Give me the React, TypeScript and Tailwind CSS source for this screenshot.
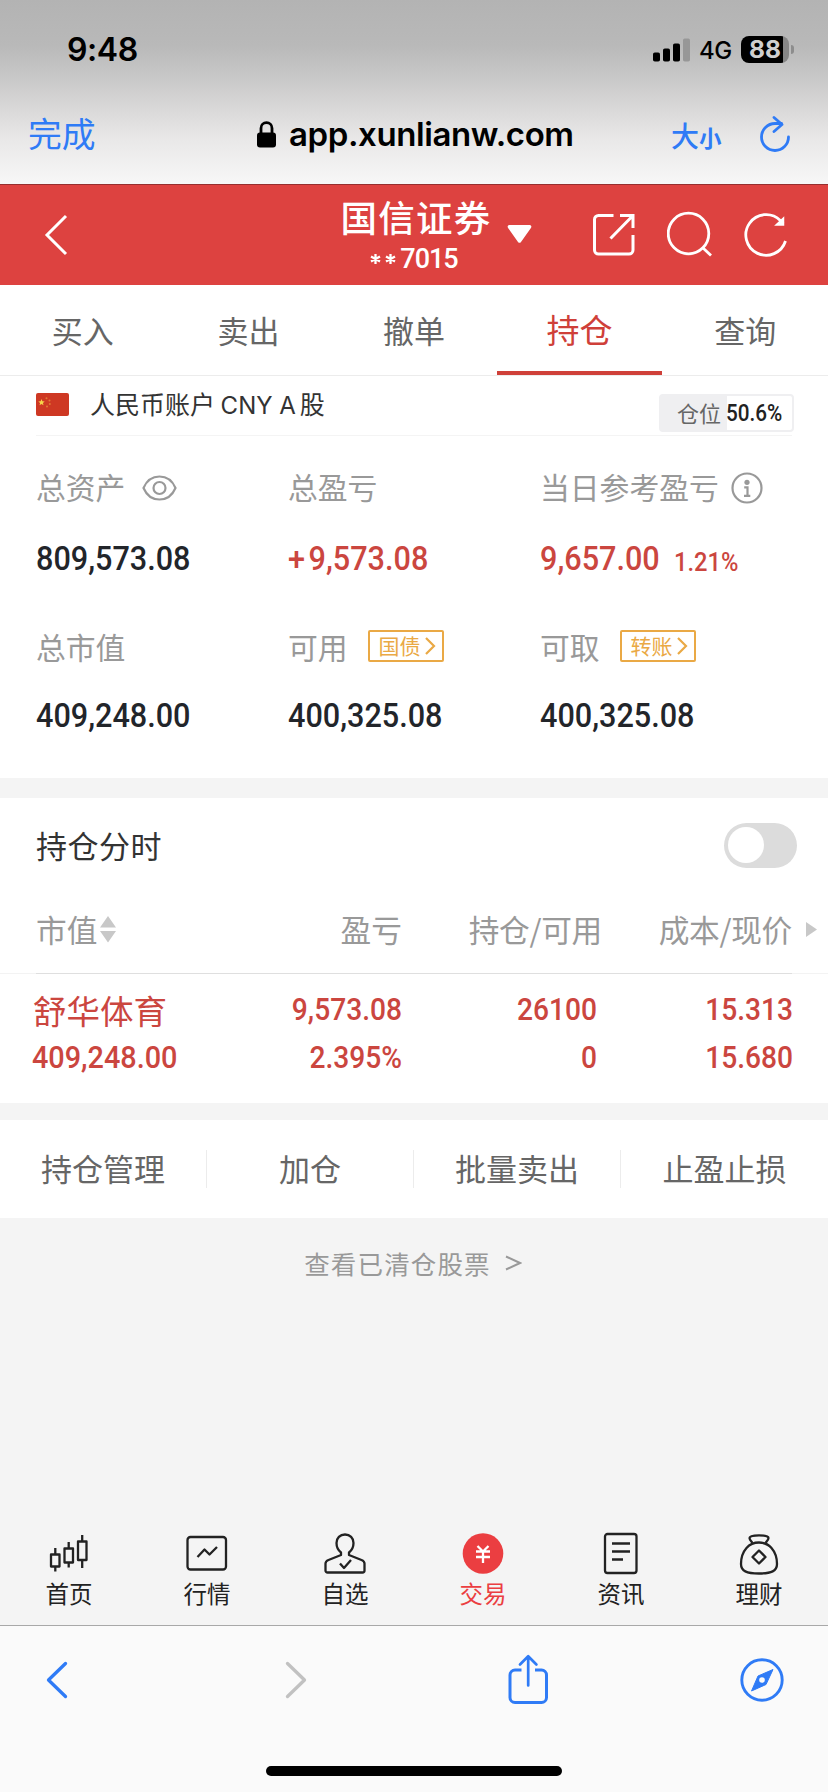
import { ReactNode } from "react";
import clsx from "clsx";

const tabs = ["买入", "卖出", "撤单", "持仓", "查询"];
const actions = ["持仓管理", "加仓", "批量卖出", "止盈止损"];

export default function App() {
  return (
    <div className="flex flex-col w-[828px] h-[1792px] overflow-hidden bg-[#f4f4f4] font-['Noto_Sans_CJK_SC',sans-serif] whitespace-nowrap">
      <BrowserHeader />
      <TitleBar />
      <Tabs />
      <AccountSummary />
      <Holdings />
      <Actions />
      <div className="flex items-center justify-center h-[90px] pr-0.5 text-[25.5px] tracking-[1.15px] text-[#999]">
        查看已清仓股票
        <svg className="ml-[14px]" width="17" height="18" viewBox="0 0 17 18" fill="none" stroke="#999" strokeWidth="2">
          <path d="M1 2.5 15 9 1 15.5" />
        </svg>
      </div>
      <div className="grow" />
      <BottomNav />
      <BrowserToolbar />
    </div>
  );
}

// Narrow digits used for every amount
const Num = ({ children, className }: { children: ReactNode; className?: string }) => (
  <span className={clsx("inline-block font-['Roboto',sans-serif] font-medium leading-none", className)}>
    {children}
  </span>
);

const BrowserHeader = () => (
  <div className="flex flex-col h-[184px] shrink-0 bg-[linear-gradient(#b3b3b3_0%,#b9b9b9_25%,#c9c9c9_43%,#dad9d9_60%,#e9e8e8_76%,#f7f7f7_100%)]">
    <div className="flex h-[99px] items-center font-['Inter',sans-serif] text-black">
      <span className="ml-[67px] w-[586px] text-[32px] font-semibold leading-none tracking-[-0.4px]">9:48</span>
      <svg width="38" height="24" viewBox="0 0 38 24">
        <rect x="0" y="14.5" width="7" height="9" rx="1.8" />
        <rect x="10" y="10.5" width="7" height="13" rx="1.8" />
        <rect x="20" y="5.5" width="7" height="18" rx="1.8" />
        <rect x="30" y="0.5" width="7" height="23" rx="1.8" fill="#979797" />
      </svg>
      <span className="ml-2 mt-0.5 w-[42px] text-[24px] font-medium leading-none tracking-[-0.5px]">4G</span>
      <div className="w-12 h-[27px] pl-2 rounded-[8px] bg-[linear-gradient(90deg,#000_42px,#868686_42px)]">
        <span className="block text-[24.5px] font-bold leading-[27px] text-[#cfcfcf]">88</span>
      </div>
      <div className="ml-[2px] w-[3px] h-[9px] rounded-r-full bg-[#8d8d8d]" />
    </div>
    <div className="flex h-[74px] items-center">
      <span className="ml-7 w-[229px] text-[33.8px] leading-none text-[#2f7bf6] pb-[7px]">完成</span>
      <svg className="mb-1" width="19" height="27" viewBox="0 0 19 27">
        <rect x="0" y="11.5" width="19" height="15" rx="3" />
        <path d="M4 13V7.2a5.5 5.5 0 0 1 11 0V13" fill="none" stroke="#000" strokeWidth="2.8" />
      </svg>
      <span className="ml-[13px] w-[382px] pb-1 text-[33px] font-semibold leading-none font-['Inter',sans-serif] tracking-[-0.4px]">
        app.xunlianw.com
      </span>
      <span className="flex items-baseline w-[88px] pb-[3px] font-medium leading-none text-[#2f7bf6]">
        <span className="text-[28px]">大</span>
        <span className="text-[22.5px] font-bold">小</span>
      </span>
      <svg className="mb-[3px]" width="32" height="38" viewBox="0 0 32 38" fill="none" stroke="#2f7bf6" strokeWidth="2.8" strokeLinecap="round" strokeLinejoin="round">
        <path d="M29.5 21A13.5 13.5 0 1 1 16 7.5h6.500" />
        <path d="M15 1.5 23 8.5 15 15.5" />
      </svg>
    </div>
  </div>
);

const TitleBar = () => (
  <div className="flex h-[101px] shrink-0 bg-[#dd4240] border-t border-[#962f2f] text-white">
    <svg className="ml-11 mt-[29px]" width="25" height="42" viewBox="0 0 25 42" fill="none" stroke="#fff" strokeWidth="3">
      <path d="M22 2 3 21l19 19" />
    </svg>
    <div className="flex flex-col items-center w-[150px] ml-[270px]">
      <span className="mt-[11px] pl-1 text-[36.5px] font-medium leading-[42px] tracking-[1.2px]">国信证券</span>
      <span className="flex mt-[5px] font-['Roboto',sans-serif] text-[27px] leading-[32px] font-medium">
        <svg className="mt-[10px] mr-1" width="26" height="12" viewBox="0 0 26 12" stroke="#fff" strokeWidth="2.3">
          <path d="M5.5 1v10M1 3.5l9 5M10 3.5l-9 5M20.5 1v10M16 3.5l9 5M25 3.5l-9 5" />
        </svg>
        <span className="tracking-[-1px]">7015</span>
      </span>
    </div>
    <svg className="ml-[18px] mt-10" width="25" height="19" viewBox="0 0 25 19" fill="#fff">
      <path d="M2.5 0h20a1.8 1.8 0 0 1 1.4 3L14 17a2 2 0 0 1-3 0L1.100 3a1.8 1.8 0 0 1 1.4-3z" />
    </svg>
    <svg className="ml-[61px] mt-7" width="42" height="43" viewBox="0 0 42 43" fill="none" stroke="#fff" strokeWidth="3">
      <path d="M20.500 2.500H5.500a4 4 0 0 0-4 4V37a4 4 0 0 0 4 4H36a4 4 0 0 0 4-4V22M27 2.500h13V15M39.500 3 17.500 25.500" />
    </svg>
    <svg className="ml-8 mt-[26px]" width="46" height="46" viewBox="0 0 46 46" fill="none" stroke="#fff" strokeWidth="2.800">
      <circle cx="21.500" cy="22.500" r="20.300" />
      <path d="M35.500 36.500 44 44.500" />
    </svg>
    <svg className="ml-[30px] mt-[26px]" width="46" height="46" viewBox="0 0 46 46" fill="none" stroke="#fff" strokeWidth="2.800">
      <path d="M42.500 30a20.300 20.300 0 1 1-5.200-20.600l3 3" />
      <path d="M40.500 7v7H33z" fill="#fff" strokeWidth="1.500" />
    </svg>
  </div>
);

const Tabs = () => (
  <div className="grid grid-cols-5 h-[91px] shrink-0 bg-white border-b border-[#ececec]">
    {tabs.map((tab) => (
      <div
        key={tab}
        className={clsx(
          "flex items-center justify-center border-b-4",
          tab === "持仓" ? "text-[33px] text-[#cf4039] border-[#cf4039] pt-[3px]" : "text-[31px] text-[#666] border-transparent pt-1"
        )}
      >
        {tab}
      </div>
    ))}
  </div>
);

const Label = ({ children }: { children: ReactNode }) => (
  <span className="text-[29.800px] leading-none text-[#999]">{children}</span>
);

const Tag = ({ children }: { children: ReactNode }) => (
  <span className="flex items-center w-[76px] h-8 ml-5 mt-[-1px] rounded-[2px] border-2 border-[#eaa945] pl-[9px] text-[21px] leading-none text-[#eaa945]">
    <span className="pb-0.5">{children}</span>
    <svg className="ml-[3px]" width="12" height="20" viewBox="0 0 12 20" fill="none" stroke="#eaa945" strokeWidth="2.200">
      <path d="m2 2 8 8-8 8" />
    </svg>
  </span>
);

const AccountSummary = () => (
  <div className="h-[422px] shrink-0 px-9 bg-white border-b-20 border-[#f4f4f4]">
    <div className="flex h-[60px] border-b border-[#f4f4f4]">
      <svg className="mt-[17px]" width="33" height="23" viewBox="0 0 33 23">
        <rect width="33" height="23" rx="2" fill="#ce3823" />
        <path d="m5.500 6 .9 2.300 2.300.1-1.800 1.600.6 2.300-2-1.300-2 1.300.6-2.300-1.800-1.600 2.300-.1z" fill="#f6d54a" />
        <g fill="#e07a35">
          <circle cx="10.500" cy="5.300" r="1" />
          <circle cx="13.500" cy="7.500" r="1" />
          <circle cx="13.800" cy="11" r="1" />
          <circle cx="11" cy="13.500" r="1" />
        </g>
      </svg>
      <span className="w-[590px] shrink-0 pl-[21px] text-[25px] leading-[55px] text-[#333]">
        人民币账户 <span className="mr-1 font-['Inter',sans-serif] text-[24px]">CNY A</span>股
      </span>
      <div className="flex items-center w-[135px] h-[38px] mt-[18px] mr-[-2px] pl-4 shrink-0 rounded-[4px] border-2 border-[#efeff1] bg-[linear-gradient(90deg,#efeff1_66px,#fff_66px)]">
        <span className="w-[49px] pb-[3px] text-[22px] leading-none text-[#666]">仓位</span>
        <Num className="text-[23px] text-[#222] origin-left scale-x-90">50.6%</Num>
      </div>
    </div>
    <div className="grid grid-cols-[252px_252px_1fr]">
      <div className="flex items-center h-[101px]">
        <Label>总资产</Label>
        <svg className="ml-[17px] mt-[3px]" width="35" height="26" viewBox="0 0 35 26" fill="none" stroke="#999" strokeWidth="2.200">
          <path d="M1.500 13C4.500 6 10.500 1.500 17.500 1.500S30.500 6 33.500 13C30.500 20 24.500 24.500 17.500 24.500S4.500 20 1.500 13z" />
          <circle cx="17.500" cy="13" r="6" />
        </svg>
      </div>
      <div className="flex items-center h-[101px]"><Label>总盈亏</Label></div>
      <div className="flex items-center h-[101px]">
        <Label>当日参考盈亏</Label>
        <svg className="ml-3 mt-0.5" width="32" height="32" viewBox="0 0 32 32" fill="none" stroke="#999" strokeWidth="2.200">
          <circle cx="16" cy="16" r="14.500" />
          <circle cx="16" cy="10.300" r="2.600" fill="#999" stroke="none" />
          <path d="M13.200 15.300h3.300v8.500M13 23.800h6.300" strokeWidth="2.200" />
        </svg>
      </div>

      <Amount className="h-[42px] text-[#22252a]">809,573.08</Amount>
      <Amount className="h-[42px] text-[#cb463f]"><span className="mr-1">+</span>9,573.08</Amount>
      <div className="flex text-[#cb463f]">
        <Amount className="h-[42px] w-[134px]">9,657.00</Amount>
        <Num className="pt-[13px] text-[25.500px] origin-left scale-x-[0.93]">1.21%</Num>
      </div>

      <div className="flex items-center h-[88px] mt-[22px] pt-[3px]"><Label>总市值</Label></div>
      <div className="flex items-center h-[88px] mt-[22px] pt-[3px]"><Label>可用</Label><Tag>国债</Tag></div>
      <div className="flex items-center h-[88px] mt-[22px] pt-[3px]"><Label>可取</Label><Tag>转账</Tag></div>

      <Amount className="h-[52px] text-[#22252a]">409,248.00</Amount>
      <Amount className="h-[52px] text-[#22252a]">400,325.08</Amount>
      <Amount className="h-[52px] text-[#22252a]">400,325.08</Amount>
    </div>
  </div>
);

const Amount = ({ children, className }: { children: ReactNode; className?: string }) => (
  <div className={clsx("flex items-center", className)}>
    <Num className="text-[34px] origin-left scale-x-90">{children}</Num>
  </div>
);

const Cell = ({ top, bottom }: { top: string; bottom: string }) => (
  <div className="flex flex-col items-end origin-right scale-x-[0.88]">
    <Num className="text-[32px] !leading-[48px]">{top}</Num>
    <Num className="text-[32px] !leading-[48px]">{bottom}</Num>
  </div>
);

const Holdings = () => (
  <div className="h-[305px] shrink-0 bg-white">
    <div className="flex items-center justify-between h-[96px] pl-9 pr-[31px]">
      <span className="pb-0.5 text-[31px] tracking-[0.5px] text-[#333]">持仓分时</span>
      <div className="w-[73px] h-[45px] mb-[2px] p-1 rounded-full bg-[#dcdcdc]">
        <div className="size-9 mt-[0.500px] rounded-full bg-white" />
      </div>
    </div>
    <div className="grid grid-cols-[200px_166px_200px_190px_36px] items-center h-[79px] pb-2 pl-9 text-[30.700px] leading-none text-right text-[#999]">
      <span className="flex items-center">
        市值
        <svg className="ml-[3px]" width="16" height="27" viewBox="0 0 16 27" fill="#c8c8c8">
          <path d="M8 0 16 11.500H0zM8 26.500 0 15h16z" />
        </svg>
      </span>
      <span>盈亏</span>
      <span className="tracking-[-0.300px]">持仓/可用</span>
      <span className="tracking-[-0.300px]">成本/现价</span>
      <svg className="ml-[14px]" width="11" height="15" viewBox="0 0 11 15" fill="#c8c8c8">
        <path d="M0 0 11 7.500 0 15z" />
      </svg>
    </div>
    <div className="h-px px-9 bg-[#f3f3f3]"><div className="h-px bg-[#dfdfdf]" /></div>
    <div className="grid grid-cols-[202px_168px_195px_196px] pl-8 pt-[11px] text-[#cb463f]">
      <div className="flex flex-col items-start">
        <span className="pt-px pl-px text-[33.500px] leading-[47px]">舒华体育</span>
        <Num className="text-[32px] !leading-[48px] origin-left scale-x-90">409,248.00</Num>
      </div>
      <Cell top="9,573.08" bottom="2.395%" />
      <Cell top="26100" bottom="0" />
      <Cell top="15.313" bottom="15.680" />
    </div>
  </div>
);

const Actions = () => (
  <div className="grid grid-cols-4 items-center h-[98px] mt-[17px] shrink-0 bg-white">
    {actions.map((action, i) => (
      <div
        key={action}
        className={clsx(
          "flex items-center justify-center h-[38px] pb-[3px] text-[31px] leading-none text-[#666]",
          i < 3 && "border-r border-[#ececec]"
        )}
      >
        {action}
      </div>
    ))}
  </div>
);

const NavItem = ({ label, active, children }: { label: string; active?: boolean; children: ReactNode }) => (
  <div className={clsx("flex flex-col items-center", active ? "text-[#eb3e41]" : "text-[#222]")}>
    <svg width="44" height="44" viewBox="0 0 44 44" fill="none" stroke="currentColor" strokeWidth="2.300" strokeLinejoin="round">
      {children}
    </svg>
    <span className="mt-px text-[23.500px] leading-[34px]">{label}</span>
  </div>
);

const BottomNav = () => (
  <div className="grid grid-cols-6 h-[94px] shrink-0">
    <NavItem label="首页">
      <path d="M4 23.500h8.500v12H4zM17.500 17.500H26v14h-8.500zM31 10.500h8.500v18.500H31zM8.300 17v6M8.300 35.500v5M21.700 11v6M21.700 31.500v5M35.200 4v6M35.200 29v8" />
    </NavItem>
    <NavItem label="行情">
      <rect x="2.500" y="6" width="38.500" height="32.500" rx="3" />
      <path d="m12.500 26 7-7.500 5 5 7.500-7.500" />
    </NavItem>
    <NavItem label="自选">
      <path d="M18 21.500c-2.500-2-4.500-5-4.500-9.500 0-5 3.500-8.500 8.500-8.500s8.500 3.500 8.500 8.500c0 4.500-2 7.500-4.500 9.500v2.500l12.500 5c2 .8 3 1.500 3 3.500v7a2 2 0 0 1-2 2H4.500a2 2 0 0 1-2-2v-7c0-2 1-2.700 3-3.500l12.500-5z" />
      <path d="m17 32.500 4 4.500 7-8" />
    </NavItem>
    <NavItem label="交易" active>
      <circle cx="22" cy="22.500" r="20.300" fill="currentColor" stroke="none" />
      <path d="m16.500 15 5.500 5.500 5.500-5.500M15 20.500h14M15 26h14M22 20.500V32" stroke="#fff" />
    </NavItem>
    <NavItem label="资讯">
      <rect x="6" y="3" width="31.500" height="39" rx="2.500" />
      <path d="M13 12.500h18M13 20.500h18M13 28.500h11" />
    </NavItem>
    <NavItem label="理财">
      <path d="M15.500 12c-1.500-2-3-3.500-3-5 0-1.800 5-2.700 9.500-2.700S31.500 5.200 31.500 7c0 1.500-1.500 3-3 5" />
      <path d="M22 11.500c-5 0-9 1.500-12.500 5.500S4 27 4 33c0 7 5.500 9.500 18 9.500S40 40 40 33c0-6-2-12-5.500-16S27 11.500 22 11.500z" />
      <path d="m22 19.500 6.500 6.500-6.500 6.500-6.500-6.500z" />
    </NavItem>
  </div>
);

const BrowserToolbar = () => (
  <div className="h-[167px] shrink-0 bg-[#fafafa] border-t border-[#a8a8a8]">
    <div className="flex items-center h-[140px] pb-8">
      <svg className="ml-[45px]" width="24" height="38" viewBox="0 0 24 38" fill="none" stroke="#2f7bf6" strokeWidth="3.300" strokeLinecap="round" strokeLinejoin="round">
        <path d="M20.500 2.500 3.500 19l17 16.500" />
      </svg>
      <svg className="ml-[216px]" width="24" height="38" viewBox="0 0 24 38" fill="none" stroke="#c1c1c1" strokeWidth="3.300" strokeLinecap="round" strokeLinejoin="round">
        <path d="M2.500 2.500 19.500 19l-17 16.500" />
      </svg>
      <svg className="ml-[199px] mb-[2px]" width="40" height="50" viewBox="0 0 40 50" fill="none" stroke="#2f7bf6" strokeWidth="3" strokeLinecap="round" strokeLinejoin="round">
        <path d="M13.500 16H7a5 5 0 0 0-5 5v22.500a5 5 0 0 0 5 5h26.500a5 5 0 0 0 5-5V21a5 5 0 0 0-5-5H27" strokeLinecap="butt" />
        <path d="M20.200 31.500V2.500M12 10.500l8.200-8.200 8.200 8.200" strokeWidth="2.700" />
      </svg>
      <svg className="ml-[192px]" width="44" height="44" viewBox="0 0 44 44">
        <circle cx="22" cy="22" r="20.200" fill="none" stroke="#2f7bf6" strokeWidth="2.900" />
        <path d="M33 11.500 26 26.500 11.500 33 18 18z" fill="#2f7bf6" stroke="#2f7bf6" strokeLinejoin="round" />
        <circle cx="22" cy="22" r="2.800" fill="#fafafa" />
      </svg>
    </div>
    <div className="w-[296px] h-[10px] mx-auto rounded-full bg-black" />
  </div>
);
